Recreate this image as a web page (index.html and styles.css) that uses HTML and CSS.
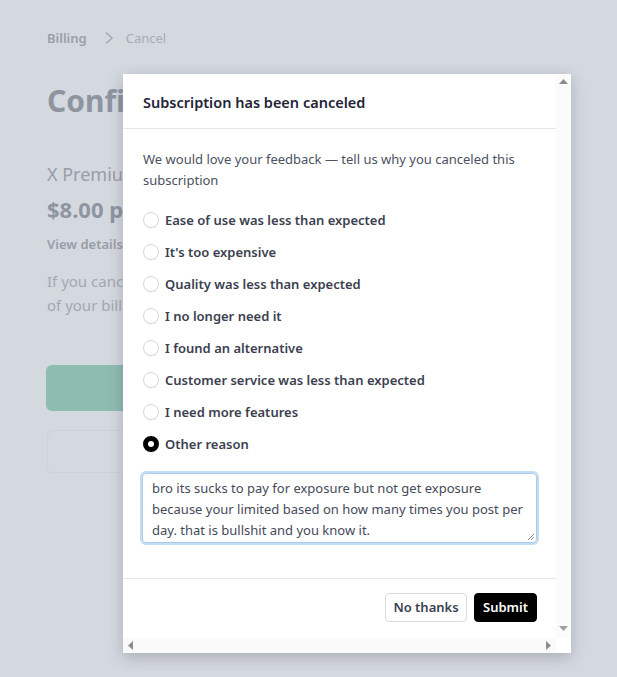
FILE: index.html
```html
<!DOCTYPE html>
<html>
<head>
<meta charset="utf-8">
<link rel="stylesheet" href="styles.css">
</head>
<body>
<div class="page">
  <nav class="crumbs"><span class="crumb-main">Billing</span><svg class="chev" width="10" height="14" viewBox="0 0 10 14"><path d="M2 1.5 L8 7 L2 12.5" fill="none" stroke="#a3a8b1" stroke-width="1.4"/></svg><span class="crumb-sub">Cancel</span></nav>
  <h1 class="title">Confirm your cancellation</h1>
  <div class="plan">X Premium</div>
  <div class="price">$8.00 per month</div>
  <div class="details">View details</div>
  <p class="note">If you cancel, your plan will remain active until the end<br>of your billing period.</p>
  <div class="btn-green"></div>
  <div class="btn-outline"></div>
</div>

<div class="modal">
  <div class="modal-scroll">
    <div class="modal-head">Subscription has been canceled</div>
    <div class="modal-body">
      <p class="lead">We would love your feedback — tell us why you canceled this subscription</p>
      <ul class="options">
        <li class="opt"><span class="radio"></span>Ease of use was less than expected</li>
        <li class="opt"><span class="radio"></span>It's too expensive</li>
        <li class="opt"><span class="radio"></span>Quality was less than expected</li>
        <li class="opt"><span class="radio"></span>I no longer need it</li>
        <li class="opt"><span class="radio"></span>I found an alternative</li>
        <li class="opt"><span class="radio"></span>Customer service was less than expected</li>
        <li class="opt"><span class="radio"></span>I need more features</li>
        <li class="opt"><span class="radio checked"></span>Other reason</li>
      </ul>
      <div class="textbox">bro its sucks to pay for exposure but not get exposure<br>because your limited based on how many times you post per<br>day. that is bullshit and you know it.<svg class="grip" width="8" height="8" viewBox="0 0 8 8"><path d="M7 1 L1 7 M7 4 L4 7" stroke="#8a8a8a" stroke-width="1"/></svg></div>
    </div>
    <div class="modal-foot">
      <button class="btn btn-light">No thanks</button>
      <button class="btn btn-dark">Submit</button>
    </div>
  </div>
  <div class="vbar">
    <svg width="9" height="5" viewBox="0 0 9 5"><path d="M0 5 L4.5 0 L9 5Z" fill="#8c8c8c"/></svg>
    <svg width="9" height="5" viewBox="0 0 9 5"><path d="M0 0 L4.5 5 L9 0Z" fill="#a0a0a0"/></svg>
  </div>
  <div class="hbar">
    <svg width="5" height="9" viewBox="0 0 5 9"><path d="M5 0 L0 4.5 L5 9Z" fill="#8c8c8c"/></svg>
    <svg width="5" height="9" viewBox="0 0 5 9"><path d="M0 0 L5 4.5 L0 9Z" fill="#8c8c8c"/></svg>
  </div>
  <div class="corner"></div>
</div>
</body>
</html>
```

FILE: styles.css
```css
html, body {
  margin: 0;
  padding: 0;
}
body {
  background: #d4d8df;
  width: 617px;
  height: 677px;
  overflow: hidden;
  font-family: "Noto Sans", "Open Sans", sans-serif;
  position: relative;
}
.page {
  padding: 28px 47px 0;
  color: #979da8;
}
.crumbs {
  display: flex;
  align-items: center;
  font-size: 13px;
  height: 20px;
}
.crumb-main {
  font-weight: 600;
  color: #9a9fa8;
}
.chev {
  margin: 0 12px 0 17px;
}
.crumb-sub {
  color: #a7acb4;
}
.title {
  margin: 35px 0 0;
  font-size: 30px;
  font-weight: 700;
  color: #8e95a1;
  line-height: 36px;
  white-space: nowrap;
}
.plan {
  margin-top: 43px;
  font-size: 18px;
  line-height: 24px;
  color: #979da8;
  white-space: nowrap;
}
.price {
  margin-top: 8px;
  font-size: 22px;
  font-weight: 700;
  line-height: 30px;
  color: #8e95a1;
  white-space: nowrap;
}
.details {
  margin-top: 10px;
  font-size: 13px;
  font-weight: 600;
  line-height: 20px;
  color: #979da8;
}
.note {
  margin: 15px 0 0;
  font-size: 15px;
  line-height: 24px;
  color: #a3a8b1;
  white-space: nowrap;
}
.btn-green {
  margin-top: 48px;
  width: 500px;
  height: 46px;
  border-radius: 6px;
  background: #8fbcb0;
  margin-left: -1px;
}
.btn-outline {
  margin-top: 19px;
  width: 500px;
  height: 43px;
  border-radius: 6px;
  border: 1px solid #cdd1d8;
  box-sizing: border-box;
}

.modal {
  position: absolute;
  left: 123px;
  top: 74px;
  width: 448px;
  height: 579px;
  background: #fff;
  box-shadow: 0 4px 14px rgba(60, 66, 80, 0.28);
  display: grid;
  grid-template-columns: 433px 15px;
  grid-template-rows: 564px 15px;
  overflow: hidden;
}
.modal-scroll {
  overflow: hidden;
  color: #374151;
}
.modal-head {
  height: 55px;
  box-sizing: border-box;
  padding: 2px 20px 0;
  display: flex;
  align-items: center;
  border-bottom: 1px solid #e5e7eb;
  font-size: 14.5px;
  font-weight: 600;
  color: #1f2437;
}
.modal-body {
  padding: 20px 20px 35px;
}
.lead {
  margin: 0;
  font-size: 13px;
  line-height: 21px;
  color: #4b5160;
}
.options {
  list-style: none;
  margin: 17px 0 0;
  padding: 0;
  display: flex;
  flex-direction: column;
  gap: 8px;
}
.opt {
  display: flex;
  align-items: center;
  height: 24px;
  font-size: 13px;
  font-weight: 600;
  color: #3b3f50;
  white-space: nowrap;
}
.radio {
  width: 16px;
  height: 16px;
  border-radius: 50%;
  border: 1px solid #d4d7dc;
  box-sizing: border-box;
  margin-right: 6px;
  background: #fff;
  box-shadow: 0 1px 1px rgba(0,0,0,0.04);
}
.radio.checked {
  border: 5px solid #000;
  background: #fff;
}
.textbox {
  position: relative;
  margin-top: 17px;
  height: 70px;
  box-sizing: border-box;
  border: 1px solid #a8cdec;
  box-shadow: 0 0 0 2px #c3dcf2;
  border-radius: 4px;
  padding: 4px 9px;
  font-size: 13px;
  line-height: 21px;
  color: #454a59;
  white-space: nowrap;
  overflow: hidden;
  margin-left: -1px;
  margin-right: -1px;
}
.grip {
  position: absolute;
  right: 1px;
  bottom: 1px;
}
.modal-foot {
  border-top: 1px solid #e5e7eb;
  padding: 14px 20px 16px;
  display: flex;
  justify-content: flex-end;
  gap: 7px;
}
.btn {
  font-family: inherit;
  font-size: 13px;
  font-weight: 600;
  height: 29px;
  padding: 0;
  border-radius: 4px;
  line-height: 1;
  white-space: nowrap;
}
.btn-light {
  background: #fff;
  border: 1px solid #d9dce1;
  color: #3b3f50;
  width: 82px;
}
.btn-dark {
  background: #000;
  border: 1px solid #000;
  color: #fff;
  width: 63px;
  margin-right: -1px;
}
.vbar {
  grid-row: 1;
  grid-column: 2;
  background: #fbfbfb;
  display: flex;
  flex-direction: column;
  justify-content: space-between;
  align-items: center;
  padding: 5px 0 7px;
}
.hbar {
  grid-row: 2;
  grid-column: 1;
  background: #fafafa;
  display: flex;
  justify-content: space-between;
  align-items: center;
  padding: 0 5px 0 5px;
}
.corner {
  grid-row: 2;
  grid-column: 2;
  background: #fff;
}
```
